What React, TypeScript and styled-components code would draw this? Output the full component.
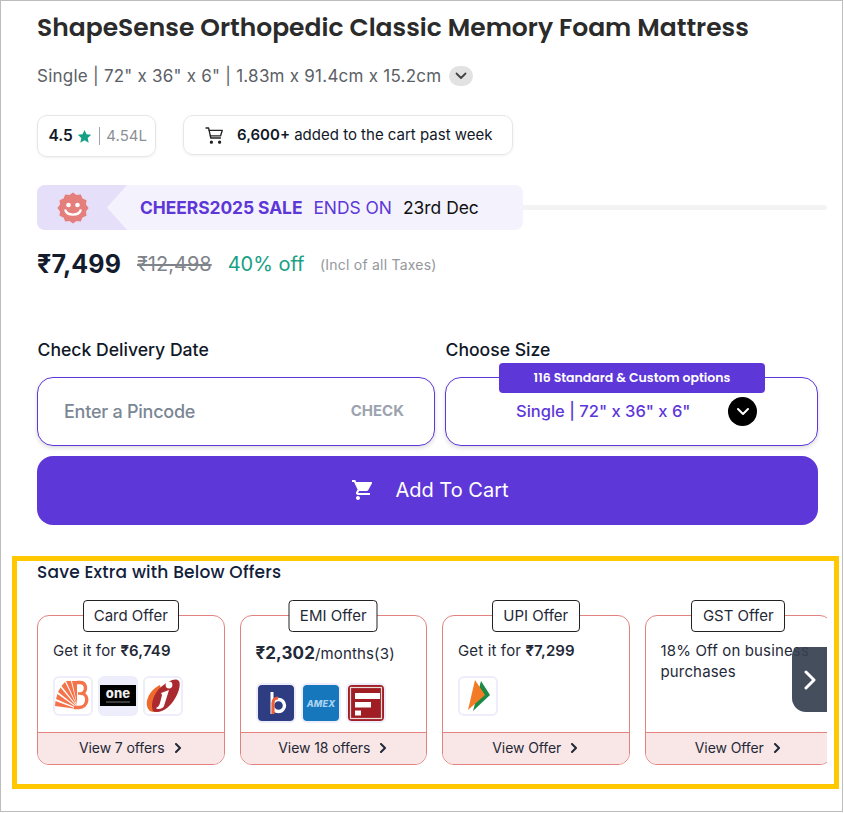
import React from "react";
import styled, { createGlobalStyle } from "styled-components";

const Global = createGlobalStyle`
  html, body { margin: 0; padding: 0; background: #fff; }
  body { font-family: Inter, "Liberation Sans", sans-serif; }
  * { box-sizing: border-box; }
`;

const Page = styled.div`
  width: 843px; height: 812px; border: 1px solid #bdbdbd; background: #fff;
  display: flex; flex-direction: column; overflow: hidden;
`;
const Top = styled.section`
  padding: 0 24px 0 36px; height: 555px; flex: none; display: flex; flex-direction: column;
`;
const Title = styled.h1`
  margin: 12px 0 0; font: 600 25px/30px Poppins, "Open Sans", Inter, sans-serif; color: #2b2b2b; white-space: nowrap;
`;
const Variant = styled.div`
  margin-top: 21px; height: 24px; display: flex; align-items: center; gap: 8px;
  font: 400 17px/24px Inter, sans-serif; color: #5c5f66; letter-spacing: .24px;
`;
const Caret = styled.span`
  width: 24px; height: 20px; border-radius: 10px; background: #e2e2e2; display: flex; align-items: center; justify-content: center;
`;
const Chips = styled.div`
  margin-top: 27px; display: flex; align-items: flex-start; gap: 27px; height: 42px;
`;
const RatingChip = styled.div`
  width: 119px; height: 42px; border: 1px solid #e6e6e6; border-radius: 10px; box-shadow: 0 1px 3px rgba(0,0,0,.06);
  display: flex; align-items: center; padding-left: 10.500px; font: 600 15.500px/20px Inter, sans-serif; color: #111827;
`;
const Star = styled.span`margin: 0 7px 0 4.500px; display: flex;`;
const RateDivider = styled.span`width: 1px; height: 18px; background: #9ca3af; margin-right: 6px;`;
const RateCount = styled.span`font-weight: 400; font-size: 15px; color: #8b8f96;`;
const CartChip = styled.div`
  width: 330px; height: 40px; border: 1px solid #e6e6e6; border-radius: 10px; box-shadow: 0 1px 3px rgba(0,0,0,.06);
  display: flex; align-items: center; padding-left: 21px; gap: 13px; font: 400 15px/20px Inter, sans-serif; color: #111827; letter-spacing: 0;
  b { font-weight: 600; }
`;
const SaleRow = styled.div`
  position: relative; margin-top: 28px; height: 45px; width: 790px;
`;
const SaleTrack = styled.div`
  position: absolute; left: 470px; right: 0; top: 20px; height: 5px; background: #f3f3f3; border-radius: 3px;
`;
const SaleBanner = styled.div`
  position: relative; width: 486px; height: 45px; border-radius: 8px; overflow: hidden; background: #f4f2fd; display: flex; align-items: center;
`;
const SaleBadge = styled.div`
  width: 90px; height: 45px; flex: none; background: #e5dffa; clip-path: polygon(0 0, 100% 0, 70px 50%, 100% 100%, 0 100%);
  display: flex; align-items: center; padding-left: 20px;
`;
const SaleText = styled.div`
  margin-left: 13px; display: flex; gap: 11px; font: 400 17.400px/22px Inter, sans-serif; white-space: nowrap;
`;
const SaleName = styled.span`font-weight: 700; color: #5e37d8; letter-spacing: -.05px;`;
const SaleEnds = styled.span`color: #5e37d8;`;
const SaleDate = styled.span`color: #111;`;
const PriceRow = styled.div`
  margin-top: 18px; height: 32px; display: flex; align-items: center;
`;
const Price = styled.span`font: 700 25px/32px Inter, sans-serif; color: #141b2d; letter-spacing: .1px;`;
const OldPrice = styled.span`margin-left: 16px; font: 400 20px/24px Inter, sans-serif; color: #7f838a; text-decoration: line-through;`;
const Discount = styled.span`margin-left: 16px; font: 400 20px/24px Inter, sans-serif; color: #16a085;`;
const Taxes = styled.span`margin: 2px 0 0 15.500px; font: 400 14px/20px Inter, sans-serif; color: #94979c; letter-spacing: .22px;`;
const Fields = styled.div`
  margin-top: 58px; display: grid; grid-template-columns: 398px 373px; column-gap: 10px;
`;
const Field = styled.div`display: flex; flex-direction: column;`;
const FieldLabel = styled.div`font: 500 17.600px/24px Inter, sans-serif; color: #111827; height: 39px; padding-left: .5px;`;
const Box = styled.div`
  position: relative; height: 69px; border: 1px solid #5e37d8; border-radius: 16px; background: #fff; box-shadow: 0 2px 4px rgba(0,0,0,.14);
  display: flex; align-items: center;
`;
const Pincode = styled.span`margin-left: 26px; font: 500 18px/24px Inter, sans-serif; color: #7b8794; flex: 1; letter-spacing: -.25px;`;
const Check = styled.span`margin: 0 30px 2px 0; font: 700 15px/20px Inter, sans-serif; color: #9ca3af;`;
const SizeTag = styled.div`
  position: absolute; left: 53px; top: -15px; width: 266px; height: 30px; border-radius: 4px; background: #5e37d8; color: #fff;
  display: flex; align-items: center; justify-content: center; font: 600 12.500px/16px Poppins, Inter, sans-serif;
`;
const SizeValue = styled.span`margin: 0 0 2px 70px; font: 500 16.500px/24px Inter, sans-serif; color: #5e37d8;`;
const SizeCaret = styled.span`
  position: absolute; left: 282px; top: 19px; width: 29px; height: 29px; border-radius: 50%; background: #000; display: flex; align-items: center; justify-content: center;
`;
const Cart = styled.button`
  margin-top: 10px; width: 781px; height: 69px; border: 0; border-radius: 16px; background: #5e37d8; color: #fff; flex: none;
  display: flex; align-items: center; justify-content: center; gap: 20px; font: 400 20px/28px Inter, sans-serif; padding: 0 0 2px 5px;
`;
const Offers = styled.section`
  margin: 0 4px 0 11px; height: 233px; border: 5px solid #ffc800; padding: 0 0 0 20px; position: relative; overflow: hidden; flex: none; width: 827px;
`;
const OffersTitle = styled.h2`margin: 0; font: 500 17px/22px Poppins, "Open Sans", Inter, sans-serif; color: #12213b; letter-spacing: .2px;`;
const Track = styled.div`
  margin-top: 16px; width: 790px; height: 166px; display: flex; gap: 15px; overflow: hidden; padding-top: 16px;
`;
const Card = styled.article`
  position: relative; flex: none; width: 187.500px; height: 150px; border: 1px solid #e2827e; border-radius: 12px; display: flex; flex-direction: column;
  background: #fff;
`;
const CardTag = styled.div<{ $w: number }>`
  position: absolute; left: 50%; top: -16px; transform: translateX(-50%); width: ${p => p.$w}px; height: 32px; border: 1px solid #222; border-radius: 4px; background: #fff;
  display: flex; align-items: center; justify-content: center; font: 400 15px/20px Inter, sans-serif; color: #1f2937;
`;
const CardBody = styled.div<{ $pt: number }>`
  flex: 1; padding: ${p => p.$pt}px 6px 0 15px; font: 400 15px/21px Inter, sans-serif; color: #1f2937; letter-spacing: .15px;
  b { font-weight: 600; }
`;
const Emi = styled.div`
  font: 400 15px/24px Inter, sans-serif; color: #1f2937; b { font: 700 17px/24px Inter, sans-serif; letter-spacing: .1px; }
`;
const Logos = styled.div<{ $mt: number }>`margin-top: ${p => p.$mt}px; display: flex; gap: 5px;`;
const Logo = styled.div<{ $bg?: string }>`
  width: 40px; height: 40px; border: 2px solid #eeedfb; border-radius: 6px; background: ${p => p.$bg || "#fff"}; overflow: hidden; display: flex; align-items: center; justify-content: center;
  svg { display: block; }
`;
const CardFoot = styled.div`
  height: 32px; flex: none; background: #f9e6e6; border-top: 1px solid #e2827e; border-radius: 0 0 11px 11px; padding-bottom: 2px;
  display: flex; align-items: center; justify-content: center; gap: 8px; font: 400 14px/20px Inter, sans-serif; color: #1f2937; letter-spacing: -.1px;
`;
const NextButton = styled.div`
  position: absolute; right: 7px; top: 86px; width: 35px; height: 65px; border-radius: 8px 0 0 14px;
  background: rgba(55,65,81,.93);
  display: flex; align-items: center; justify-content: center;
`;

const Chevron = ({ size = 10, color = "#1f2937", width = 2 }: { size?: number; color?: string; width?: number }) => (
  <svg width={size} height={size} viewBox="0 0 10 10" fill="none"><path d="M3 1 L7 5 L3 9" stroke={color} strokeWidth={width} strokeLinecap="round" strokeLinejoin="round" /></svg>
);

const CartIcon = () => (
  <svg width="19" height="19" viewBox="0 0 19 19" fill="none" stroke="#222" strokeWidth="1.300" strokeLinecap="round" strokeLinejoin="round">
    <path d="M1 2h2.600l2.200 10h9.600" /><path d="M4.100 4.300h13.200l-1.700 5.500H5.300" />
    <circle cx="6.400" cy="16.200" r="1" fill="#222" /><circle cx="14.600" cy="16.200" r="1" fill="#222" />
  </svg>
);

const FilledCart = () => (
  <svg width="24" height="24" viewBox="0 0 24 24" fill="#fff"><path d="M7 18c-1.100 0-1.990.9-1.990 2S5.900 22 7 22s2-.9 2-2-.9-2-2-2zM1 2v2h2l3.600 7.590-1.350 2.450c-.160.280-.250.610-.250.960 0 1.100.9 2 2 2h12v-2H7.420c-.140 0-.250-.110-.250-.250l.030-.120.900-1.630h7.450c.750 0 1.410-.410 1.750-1.030l3.580-6.490A1 1 0 0 0 20 4H5.210l-.940-2H1z" /></svg>
);

const Smiley = () => {
  const pts: string[] = [];
  for (let i = 0; i < 24; i++) {
    const r = i % 2 ? 13.400 : 15.600;
    const a = (i / 24) * Math.PI * 2;
    pts.push(`${16 + r * Math.cos(a)},${16 + r * Math.sin(a)}`);
  }
  return (
    <svg width="32" height="32" viewBox="0 0 32 32">
      <polygon points={pts.join(" ")} fill="#e57f7c" />
      <circle cx="11.500" cy="13" r="2.300" fill="#fff" /><circle cx="20.500" cy="13" r="2.300" fill="#fff" />
      <path d="M8.500 18.500c2 5.500 13 5.500 15 0" fill="none" stroke="#fff" strokeWidth="2.400" strokeLinecap="round" />
    </svg>
  );
};

const Baroda = () => (
  <svg width="36" height="36" viewBox="0 0 36 36">
    <g fill="#f4734a">
      <path d="M22 31L0 28l.5-5z" />
      <path d="M22 30L1 21l1.500-5z" />
      <path d="M22 29L3 14l2.500-4.500z" />
      <path d="M22 28L6.500 8l3.500-4z" />
      <path d="M22 27L11 3h5z" />
      <path d="M22 26L17 3h5z" />
    </g>
    <path d="M22 4.500h3c6.500 0 7 8 2.500 11 6.500 2 5.500 14-3.500 14h-5" fill="none" stroke="#f4734a" strokeWidth="3.400" />
    <path d="M23 15.500h4" fill="none" stroke="#f4734a" strokeWidth="2.400" />
  </svg>
);
const OneCard = () => (
  <svg width="36" height="22" viewBox="0 0 36 22">
    <rect width="36" height="21" fill="#000" />
    <text x="18" y="13" textAnchor="middle" fontFamily="Inter, sans-serif" fontWeight="800" fontSize="13" fill="#eee">one</text>
    <rect x="6" y="16.500" width="24" height="1" fill="#777" />
  </svg>
);
const Icici = () => (
  <svg width="36" height="36" viewBox="0 0 36 36">
    <path d="M5 33C-1 28 2 17 9 11C11 9 13 8 15 7L20 30C15 34 9 35 5 33Z" fill="#ef6a2a" />
    <path d="M8 33C5 26 9 15 16 9C23 3 31-1 34 3C37 9 30 24 22 30C17 34 11 35 8 33Z" fill="#ab2a30" />
    <circle cx="24" cy="7" r="3.400" fill="#fff" />
    <path d="M16 15l8-3-5 16c-1 3-7 4-8 2 2-1 3-2 4-5l2-8z" fill="#fff" />
  </svg>
);
const Bajaj = () => (
  <svg width="36" height="36" viewBox="0 0 36 36">
    <rect width="36" height="36" rx="2" fill="#2e3c82" />
    <circle cx="20.500" cy="20.500" r="6" fill="none" stroke="#fff" strokeWidth="3.400" />
    <path d="M12.500 7h3v22h-3z" fill="#fff" />
    <path d="M15 29V18c0-3 2-5 5-5" fill="none" stroke="#ee5f37" strokeWidth="3.200" />
  </svg>
);
const Amex = () => (
  <svg width="36" height="36" viewBox="0 0 36 36">
    <rect width="36" height="36" rx="2" fill="#1677bd" />
    <text x="18" y="21.500" textAnchor="middle" fontFamily="Inter, sans-serif" fontStyle="italic" fontWeight="800" fontSize="9" fill="#a9d3f1">AMEX</text>
  </svg>
);
const Federal = () => (
  <svg width="36" height="36" viewBox="0 0 36 36">
    <rect width="36" height="36" fill="#a11d24" />
    <rect x="2.500" y="2.500" width="31" height="31" fill="none" stroke="#e9dcd9" strokeWidth="1.200" />
    <rect x="7" y="8" width="25" height="6" fill="#fff" />
    <rect x="7" y="17" width="16" height="5.500" fill="#fff" />
    <rect x="7" y="25.500" width="6" height="5" fill="#fff" />
  </svg>
);
const Bhim = () => (
  <svg width="36" height="36" viewBox="0 0 36 36">
    <path d="M21 3 L30 17 L13 33z" fill="#1a8a45" />
    <path d="M15 2 L25 17 L8 32z" fill="#f47b25" />
  </svg>
);

const App = () => (
  <Page>
    <Global />
    <Top>
      <Title>ShapeSense Orthopedic Classic Memory Foam Mattress</Title>
      <Variant>
        <span>Single | 72" x 36" x 6" | 1.83m x 91.4cm x 15.2cm</span>
        <Caret><svg width="12" height="8" viewBox="0 0 12 8" fill="none"><path d="M1.500 1.500 6 6l4.500-4.500" stroke="#444" strokeWidth="1.800" strokeLinecap="round" strokeLinejoin="round" /></svg></Caret>
      </Variant>
      <Chips>
        <RatingChip>
          4.5
          <Star><svg width="15" height="15" viewBox="0 0 24 24" fill="#16a085"><path d="M12 1.500l3.200 7 7.600.8-5.700 5.100 1.600 7.500L12 18l-6.700 3.900 1.600-7.500L1.200 9.300l7.600-.8z" /></svg></Star>
          <RateDivider />
          <RateCount>4.54L</RateCount>
        </RatingChip>
        <CartChip>
          <CartIcon />
          <span><b>6,600+</b> added to the cart past week</span>
        </CartChip>
      </Chips>
      <SaleRow>
        <SaleTrack />
        <SaleBanner>
          <SaleBadge><Smiley /></SaleBadge>
          <SaleText>
            <SaleName>CHEERS2025 SALE</SaleName>
            <SaleEnds>ENDS ON</SaleEnds>
            <SaleDate>23rd Dec</SaleDate>
          </SaleText>
        </SaleBanner>
      </SaleRow>
      <PriceRow>
        <Price>₹7,499</Price>
        <OldPrice>₹12,498</OldPrice>
        <Discount>40% off</Discount>
        <Taxes>(Incl of all Taxes)</Taxes>
      </PriceRow>
      <Fields>
        <Field>
          <FieldLabel>Check Delivery Date</FieldLabel>
          <Box><Pincode>Enter a Pincode</Pincode><Check>CHECK</Check></Box>
        </Field>
        <Field>
          <FieldLabel>Choose Size</FieldLabel>
          <Box>
            <SizeTag>116 Standard &amp; Custom options</SizeTag>
            <SizeValue>Single | 72" x 36" x 6"</SizeValue>
            <SizeCaret><svg width="14" height="10" viewBox="0 0 14 10" fill="none"><path d="M2 2l5 5 5-5" stroke="#fff" strokeWidth="2" strokeLinecap="round" strokeLinejoin="round" /></svg></SizeCaret>
          </Box>
        </Field>
      </Fields>
      <Cart><FilledCart />Add To Cart</Cart>
    </Top>
    <Offers>
      <OffersTitle>Save Extra with Below Offers</OffersTitle>
      <Track>
        <Card>
          <CardTag $w={96}>Card Offer</CardTag>
          <CardBody $pt={24}>
            Get it for <b>₹6,749</b>
            <Logos $mt={15}>
              <Logo><Baroda /></Logo>
              <Logo $bg="#eeedfb"><OneCard /></Logo>
              <Logo><Icici /></Logo>
            </Logos>
          </CardBody>
          <CardFoot>View 7 offers <Chevron /></CardFoot>
        </Card>
        <Card>
          <CardTag $w={89}>EMI Offer</CardTag>
          <CardBody $pt={25}>
            <Emi><b>₹2,302</b>/months(3)</Emi>
            <Logos $mt={17}>
              <Logo><Bajaj /></Logo>
              <Logo><Amex /></Logo>
              <Logo><Federal /></Logo>
            </Logos>
          </CardBody>
          <CardFoot>View 18 offers <Chevron /></CardFoot>
        </Card>
        <Card>
          <CardTag $w={88}>UPI Offer</CardTag>
          <CardBody $pt={24}>
            Get it for <b>₹7,299</b>
            <Logos $mt={15}><Logo><Bhim /></Logo></Logos>
          </CardBody>
          <CardFoot>View Offer <Chevron /></CardFoot>
        </Card>
        <Card>
          <CardTag $w={94}>GST Offer</CardTag>
          <CardBody $pt={24}>18% Off on business purchases</CardBody>
          <CardFoot>View Offer <Chevron /></CardFoot>
        </Card>
      </Track>
      <NextButton><Chevron size={20} color="#fff" width={1.500} /></NextButton>
    </Offers>
  </Page>
);

export default App;
